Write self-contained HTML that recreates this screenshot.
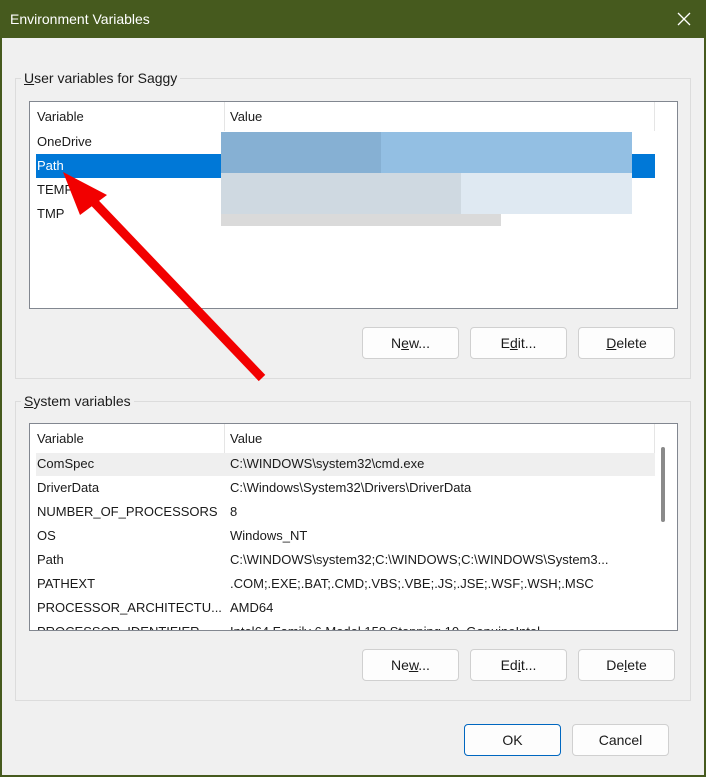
<!DOCTYPE html>
<html><head><style>
*{margin:0;padding:0;box-sizing:border-box}
body{width:706px;height:777px;background:#465a1e;font-family:"Liberation Sans",sans-serif;font-size:13px;color:#1a1a1a;position:relative;overflow:hidden}
.win{position:absolute;left:2px;top:38px;width:702px;height:737px;background:#f0f0f0}
.title{position:absolute;left:10px;top:11px;color:#fff;font-size:14px}
.x{position:absolute;left:676px;top:8px;color:#fff;font-size:20px;font-weight:100;font-family:"DejaVu Sans",sans-serif}
.grp{position:absolute;border:1px solid #dcdcdc;}
.lbl{position:absolute;background:#f0f0f0;padding:0 3px;font-size:14px}
.list{position:absolute;background:#fff;border:1px solid #828790;overflow:hidden}
.hdr{position:absolute;top:0;height:29px;line-height:29px}
.row{position:absolute;height:24px;line-height:24px;white-space:nowrap}
.btn{position:absolute;width:97px;height:32px;background:#fdfdfd;border:1px solid #d0d0d0;border-radius:4px;text-align:center;line-height:30px;font-size:14px}
.blk{position:absolute}
</style></head><body>
<div class="title">Environment Variables</div>
<svg style="position:absolute;left:677px;top:12px" width="14" height="14"><path d="M1 1L13 13M13 1L1 13" stroke="#fff" stroke-width="1.3"/></svg>
<div class="win"></div>
<div class="grp" style="left:15px;top:78px;width:676px;height:301px"></div>
<div class="lbl" style="left:21px;top:70px"><u>U</u>ser variables for Saggy</div>
<div class="list" style="left:29px;top:101px;width:649px;height:208px">
 <div style="position:absolute;left:194px;top:0;width:1px;height:29px;background:#e5e5e5"></div>
 <div style="position:absolute;left:624px;top:0;width:1px;height:29px;background:#e5e5e5"></div>
 <div class="hdr" style="left:7px">Variable</div><div class="hdr" style="left:200px">Value</div>
 <div style="position:absolute;left:6px;top:52px;width:619px;height:24px;background:#0078d7"></div>
 <div class="row" style="left:7px;top:28px">OneDrive</div>
 <div class="row" style="left:7px;top:52px;color:#fff">Path</div>
 <div class="row" style="left:7px;top:76px">TEMP</div>
 <div class="row" style="left:7px;top:100px">TMP</div>
 <div class="blk" style="left:191px;top:30px;width:411px;height:41px;background:#93bfe3"></div>
 <div class="blk" style="left:191px;top:30px;width:160px;height:41px;background:#86b0d3"></div>
 <div class="blk" style="left:191px;top:71px;width:411px;height:41px;background:#dfe9f2"></div>
 <div class="blk" style="left:191px;top:71px;width:240px;height:41px;background:#cfd9e1"></div>
 <div class="blk" style="left:191px;top:112px;width:280px;height:12px;background:#dadada"></div>
</div>
<div class="btn" style="left:362px;top:327px">N<u>e</u>w...</div>
<div class="btn" style="left:470px;top:327px">E<u>d</u>it...</div>
<div class="btn" style="left:578px;top:327px"><u>D</u>elete</div>

<div class="grp" style="left:15px;top:401px;width:676px;height:300px"></div>
<div class="lbl" style="left:21px;top:393px"><u>S</u>ystem variables</div>
<div class="list" style="left:29px;top:423px;width:649px;height:208px">
 <div style="position:absolute;left:194px;top:0;width:1px;height:29px;background:#e5e5e5"></div>
 <div style="position:absolute;left:624px;top:0;width:1px;height:29px;background:#e5e5e5"></div>
 <div style="position:absolute;left:631px;top:23px;width:4px;height:75px;background:#8a8a8a;border-radius:2px"></div>
 <div class="hdr" style="left:7px">Variable</div><div class="hdr" style="left:200px">Value</div>
 <div style="position:absolute;left:6px;top:29px;width:619px;height:23px;background:#efefef"></div>
 <div class="row" style="left:7px;top:28px">ComSpec</div><div class="row" style="left:200px;top:28px">C:\WINDOWS\system32\cmd.exe</div>
 <div class="row" style="left:7px;top:52px">DriverData</div><div class="row" style="left:200px;top:52px">C:\Windows\System32\Drivers\DriverData</div>
 <div class="row" style="left:7px;top:76px">NUMBER_OF_PROCESSORS</div><div class="row" style="left:200px;top:76px">8</div>
 <div class="row" style="left:7px;top:100px">OS</div><div class="row" style="left:200px;top:100px">Windows_NT</div>
 <div class="row" style="left:7px;top:124px">Path</div><div class="row" style="left:200px;top:124px">C:\WINDOWS\system32;C:\WINDOWS;C:\WINDOWS\System3...</div>
 <div class="row" style="left:7px;top:148px">PATHEXT</div><div class="row" style="left:200px;top:148px">.COM;.EXE;.BAT;.CMD;.VBS;.VBE;.JS;.JSE;.WSF;.WSH;.MSC</div>
 <div class="row" style="left:7px;top:172px">PROCESSOR_ARCHITECTU...</div><div class="row" style="left:200px;top:172px">AMD64</div>
 <div class="row" style="left:7px;top:196px">PROCESSOR_IDENTIFIER</div><div class="row" style="left:200px;top:196px">Intel64 Family 6 Model 158 Stepping 10, GenuineIntel</div>
</div>
<div class="btn" style="left:362px;top:649px">Ne<u>w</u>...</div>
<div class="btn" style="left:470px;top:649px">Ed<u>i</u>t...</div>
<div class="btn" style="left:578px;top:649px">De<u>l</u>ete</div>

<div class="btn" style="left:464px;top:724px;border:1px solid #0067c0">OK</div>
<div class="btn" style="left:572px;top:724px">Cancel</div>

<svg style="position:absolute;left:0;top:0" width="706" height="777">
 <line x1="262" y1="378" x2="92" y2="200" stroke="#f20000" stroke-width="9"/>
 <polygon points="63,172 107,195 80,215" fill="#f20000"/>
</svg>
</body></html>
